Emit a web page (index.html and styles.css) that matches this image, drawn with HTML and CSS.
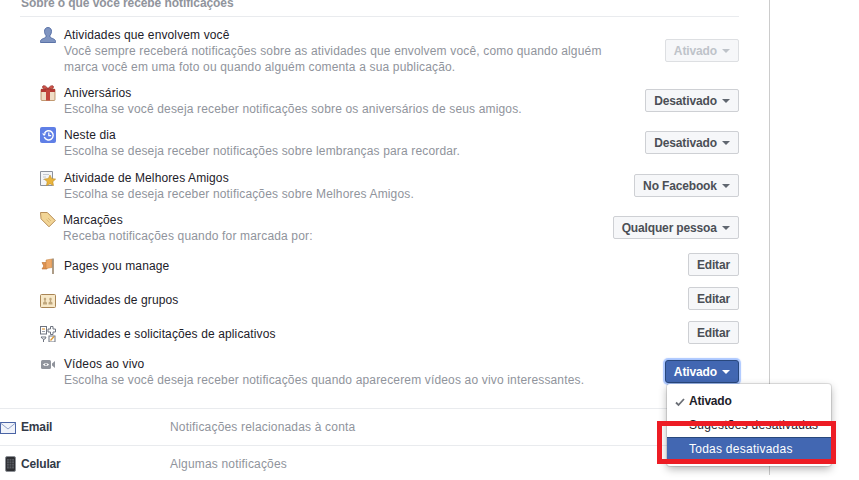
FILE: index.html
```html
<!DOCTYPE html>
<html lang="pt">
<head>
    <meta charset="UTF-8">
    <meta name="viewport" content="width=device-width, initial-scale=1.0">
    <title>Notificações</title>
    <link rel="stylesheet" href="styles.css">
</head>
<body>
    <div class="page">
        <div class="column">

            <!-- Sobre o que você recebe notificações -->
            <div class="section">
                <h3 class="section-title">Sobre o que você recebe notificações</h3>
                <div class="list">

                    <div class="row">
                        <svg class="icon" viewBox="0 0 16 16">
                            <path d="M8 0.500c2.300 0 3.500 1.700 3.500 3.800 0 1.700-.7 3.300-1.500 4.200v1.500c.4.800 2.400 1.300 3.700 2 1.200.6 1.800 1.400 1.800 2.300v1.200H.5v-1.200c0-.9.600-1.700 1.800-2.300 1.300-.7 3.300-1.200 3.700-2V8.500C5.200 7.600 4.500 6 4.500 4.300 4.500 2.200 5.700.5 8 .5z" fill="#7f94c0" stroke="#4f69a2" stroke-width=".9"/>
                        </svg>
                        <div class="row-text">
                            <div class="row-title">Atividades que envolvem você</div>
                            <div class="row-desc">Você sempre receberá notificações sobre as atividades que envolvem você, como quando alguém<br>marca você em uma foto ou quando alguém comenta a sua publicação.</div>
                        </div>
                        <div class="button disabled">Ativado <i class="caret"></i></div>
                    </div>

                    <div class="row">
                        <svg class="icon" viewBox="0 0 16 16">
                            <rect x="1" y="4" width="14" height="11.500" rx="1" fill="#efdcc6" stroke="#a9743f" stroke-width=".7"/>
                            <rect x="1" y="4" width="14" height="3" fill="#b23a34"/>
                            <rect x="6" y="4" width="4" height="11.500" fill="#c2453d"/>
                            <path d="M8 4C6 0 2.500 0 2.500 2S6 4 8 4c2 0 5.500 0 5.500-2S10 0 8 4z" fill="#d0554a" stroke="#8f2a26" stroke-width=".7"/>
                        </svg>
                        <div class="row-text">
                            <div class="row-title">Aniversários</div>
                            <div class="row-desc">Escolha se você deseja receber notificações sobre os aniversários de seus amigos.</div>
                        </div>
                        <div class="button">Desativado <i class="caret"></i></div>
                    </div>

                    <div class="row row-extra">
                        <svg class="icon" viewBox="0 0 16 16">
                            <rect width="16" height="16" rx="2" fill="#5f7fe6"/>
                            <path d="M4.500 6.200A4.600 4.600 0 1 1 4.300 10" fill="none" stroke="#fff" stroke-width="1.400"/>
                            <path d="M2 6.500h4.200L4.100 9z" fill="#fff"/>
                            <path d="M8.800 5.500v3.200h2.400" fill="none" stroke="#fff" stroke-width="1.200"/>
                        </svg>
                        <div class="row-text">
                            <div class="row-title">Neste dia</div>
                            <div class="row-desc">Escolha se deseja receber notificações sobre lembranças para recordar.</div>
                        </div>
                        <div class="button">Desativado <i class="caret"></i></div>
                    </div>

                    <div class="row">
                        <svg class="icon" viewBox="0 0 16 16">
                            <path d="M.5 1.500h12v14H.5z" fill="#f4f5f7" stroke="#8d929c"/>
                            <path d="M3 4.500h6M3 7h3M3 9.500h2" stroke="#c5c9d0"/>
                            <path d="M10 5l1.700 3.600 4 .5-2.900 2.700.8 3.900-3.600-2-3.600 2 .8-3.900-2.900-2.700 4-.5z" fill="#e9b43c" stroke="#b78622" stroke-width=".5"/>
                        </svg>
                        <div class="row-text">
                            <div class="row-title">Atividade de Melhores Amigos</div>
                            <div class="row-desc">Escolha se deseja receber notificações sobre Melhores Amigos.</div>
                        </div>
                        <div class="button">No Facebook <i class="caret"></i></div>
                    </div>

                    <div class="row row-tag">
                        <svg class="icon" viewBox="0 0 16 16">
                            <path d="M.5.500h6.800l8 8-6.300 6.300-8-8z" fill="#f2d596" stroke="#b78e58"/>
                            <path d="M8 6l3 3M6.500 7.500l3 3" stroke="#d3b070" stroke-width=".8"/>
                        </svg>
                        <div class="row-text">
                            <div class="row-title">Marcações</div>
                            <div class="row-desc">Receba notificações quando for marcada por:</div>
                        </div>
                        <div class="button">Qualquer pessoa <i class="caret"></i></div>
                    </div>

                    <div class="row row-single">
                        <svg class="icon" viewBox="0 0 16 16">
                            <path d="M2 4.500h4l1 1.500v5H2l1.800-3z" fill="#e0914f" stroke="#b8702f" stroke-width=".6"/>
                            <path d="M6 2l6-1v8.500l-6 1z" fill="#eda868" stroke="#c0803f" stroke-width=".5"/>
                            <path d="M13 0.500V16" stroke="#8a7355" stroke-width="1.400"/>
                        </svg>
                        <div class="row-text">
                            <div class="row-title">Pages you manage</div>
                        </div>
                        <div class="button">Editar</div>
                    </div>

                    <div class="row row-single">
                        <svg class="icon" viewBox="0 0 16 16">
                            <rect x=".5" y="2.500" width="15" height="13" rx="1" fill="#f7e8c8" stroke="#a98555"/>
                            <path d="M3 12.500V11c0-.8 1-1.100 1.500-1.400v-.8C4 8.400 3.800 7.800 3.800 7.200c0-.9.500-1.400 1.200-1.400s1.200.5 1.200 1.400c0 .6-.2 1.200-.7 1.600v.8C6 9.900 7 10.200 7 11v1.500z" fill="#bfa67c"/>
                            <path d="M8.500 12.500V11c0-.8 1-1.100 1.500-1.400v-.8c-.5-.4-.7-1-.7-1.600 0-.9.500-1.400 1.200-1.400s1.200.5 1.200 1.400c0 .6-.2 1.200-.7 1.600v.8c.5.300 1.500.6 1.500 1.400v1.500z" fill="#bfa67c"/>
                        </svg>
                        <div class="row-text">
                            <div class="row-title">Atividades de grupos</div>
                        </div>
                        <div class="button">Editar</div>
                    </div>

                    <div class="row row-single">
                        <svg class="icon" viewBox="0 0 16 16">
                            <rect x=".5" y=".5" width="6" height="7.500" fill="#fff" stroke="#6f7480"/>
                            <path d="M2 3h3" stroke="#e39a3c" stroke-width="1.200"/>
                            <path d="M2 5.500h3" stroke="#9aa0ab"/>
                            <path d="M10.500.5h2.500v2.500h2.500v3H13v2.500h-2.500V6H8V3h2.500z" fill="#fff" stroke="#6f7480"/>
                            <path d="M1 11h5L5 13l-2 .3zM3.500 13.500v2.500" fill="#fff" stroke="#6f7480"/>
                            <rect x="9" y="10" width="6" height="6" fill="#fff" stroke="#6f7480"/>
                            <path d="M10.500 14.500l3.500-4" stroke="#dd9a35" stroke-width="1.300"/>
                        </svg>
                        <div class="row-text">
                            <div class="row-title">Atividades e solicitações de aplicativos</div>
                        </div>
                        <div class="button">Editar</div>
                    </div>

                    <div class="row">
                        <svg class="icon" viewBox="0 0 16 16">
                            <rect x="1" y="4" width="10" height="9" rx="1.500" fill="#90949c"/>
                            <path d="M12 7.500l3-2.500v7l-3-2.500z" fill="#90949c"/>
                            <path d="M2.800 8.500Q6 5.500 9.200 8.500 6 11.500 2.800 8.500z" fill="#fff"/>
                            <circle cx="6" cy="8.500" r="1.100" fill="#90949c"/>
                        </svg>
                        <div class="row-text">
                            <div class="row-title">Vídeos ao vivo</div>
                            <div class="row-desc">Escolha se você deseja receber notificações quando aparecerem vídeos ao vivo interessantes.</div>
                        </div>
                        <div class="button-wrap">
                            <div class="button active">Ativado <i class="caret"></i></div>
                            <div class="menu">
                                <div class="menu-item checked">
                                    <svg class="check" viewBox="0 0 10 10"><path d="M1 5.500l2.500 2.500L9 2" fill="none" stroke="#6b6f76" stroke-width="1.800"/></svg>
                                    Ativado
                                </div>
                                <div class="menu-item">Sugestões desativadas</div>
                                <div class="menu-item selected">Todas desativadas</div>
                            </div>
                        </div>
                    </div>

                </div>
            </div>

            <!-- Canais -->
            <div class="channel">
                <div class="channel-name">
                    <svg class="channel-icon" viewBox="0 0 16 16">
                        <rect x=".5" y="3.500" width="15" height="11" fill="#f0f3fa" stroke="#4a64a5"/>
                        <path d="M.5 4L8 10l7.500-6" fill="none" stroke="#8fa0c8"/>
                    </svg>
                    Email
                </div>
                <div class="channel-desc">Notificações relacionadas à conta</div>
            </div>
            <div class="channel">
                <div class="channel-name">
                    <svg class="channel-icon" viewBox="0 0 16 16">
                        <rect x="5.500" y=".5" width="10" height="15" rx="1.500" fill="#2e2f33" stroke="#8d9096"/>
                        <rect x="7" y="3" width="7" height="9.500" fill="#55585e"/>
                        <path d="M7 5h7M7 7.500h7M7 10h7M9.300 3v9.500M11.600 3v9.500" stroke="#2e2f33" stroke-width=".6"/>
                    </svg>
                    Celular
                </div>
                <div class="channel-desc">Algumas notificações</div>
            </div>

        </div>

        <!-- marcação vermelha do print -->
        <div class="highlight"></div>
    </div>
</body>
</html>
```

FILE: styles.css
```css
html, body {
    margin: 0;
    height: 100%;
    overflow: hidden;
}

body {
    font-family: "Liberation Sans", Arial, sans-serif;
    font-size: 12px;
    line-height: 16px;
    background-color: #fff;
    color: #1d2129;
}

.page {
    position: relative;
    height: 480px;
}

.column {
    box-sizing: border-box;
    width: 770px;
    height: 480px;
    padding-right: 30px;
    border-right: 1px solid #ccc;
}

.section {
    margin-left: 20px;
    padding-bottom: 16px;
}

.section-title {
    margin: -5px 0 0;
    padding: 0 0 5px 1px;
    border-bottom: 1px solid #e9ebee;
    font-size: 12px;
    line-height: 16px;
    font-weight: bold;
    letter-spacing: -.08px;
    color: #90949c;
}

.list {
    padding: 4px 0 0 20px;
}

.row {
    display: flex;
    align-items: center;
    padding: 5px 0;
}

.row-extra {
    padding-bottom: 6px;
}

.row-tag .row-text {
    margin-left: 7px;
}

.row-single {
    padding: 5px 0 6px;
}

.icon {
    flex: none;
    align-self: flex-start;
    width: 16px;
    height: 16px;
    margin: 1px 0 -1px;
}

.row-single .icon {
    align-self: center;
}

.row-text {
    flex: 1;
    margin: 0 0 -1px 8px;
    padding-top: 1px;
}

.row-title {
    letter-spacing: .12px;
}

.row-desc {
    color: #90949c;
    letter-spacing: .16px;
}

.button {
    display: flex;
    align-items: center;
    box-sizing: border-box;
    height: 23px;
    padding: 1px 8px 0;
    border: 1px solid #ced0d4;
    border-radius: 2px;
    background-color: #f6f7f9;
    color: #4b4f56;
    font-weight: bold;
    letter-spacing: -.15px;
    white-space: pre;
}

.button.disabled {
    border-color: #dddfe2;
    color: #bec3c9;
}

.button.disabled .caret {
    border-top-color: #bec3c9;
}

.button.active {
    border-color: #29487d;
    border-radius: 3px;
    background-color: #4267b2;
    color: #fff;
    box-shadow: 0 0 1px 2px rgba(88, 144, 255, .5);
}

.button.active .caret {
    border-top-color: #fff;
}

.caret {
    width: 0;
    height: 0;
    margin-left: 2px;
    border-style: solid;
    border-width: 4px 4px 0;
    border-color: #606770 transparent transparent;
}

.button-wrap {
    position: relative;
}

.menu {
    position: absolute;
    top: 24px;
    right: -92px;
    z-index: 2;
    width: 164px;
    padding: 5px 0;
    background-color: #fff;
    border-radius: 3px;
    box-shadow: 0 0 0 1px rgba(0, 0, 0, .1), 0 3px 9px rgba(0, 0, 0, .3);
}

.menu-item {
    position: relative;
    box-sizing: border-box;
    height: 24px;
    padding: 4px 10px 4px 22px;
    color: #1d2129;
    letter-spacing: .25px;
    white-space: nowrap;
}

.menu-item.checked {
    font-weight: bold;
    letter-spacing: -.2px;
}

.menu-item.selected {
    border-top: 1px solid #29487d;
    border-bottom: 1px solid #29487d;
    padding-top: 3px;
    background-color: #4267b2;
    color: #fff;
}

.check {
    position: absolute;
    top: 8px;
    left: 8px;
    width: 10px;
    height: 10px;
}

.channel {
    display: flex;
    align-items: center;
    box-sizing: border-box;
    height: 37px;
    border-top: 1px solid #e9ebee;
}

.channel-name {
    display: flex;
    align-items: center;
    width: 170px;
    font-weight: bold;
    letter-spacing: -.15px;
    color: #333a47;
}

.channel-icon {
    width: 16px;
    height: 16px;
    margin-right: 5px;
}

.channel-desc {
    color: #90949c;
    letter-spacing: .18px;
}

.highlight {
    position: absolute;
    top: 426px;
    left: 657px;
    z-index: 3;
    box-sizing: border-box;
    width: 179px;
    height: 43px;
    border: 5px solid #ed1c24;
}
```
